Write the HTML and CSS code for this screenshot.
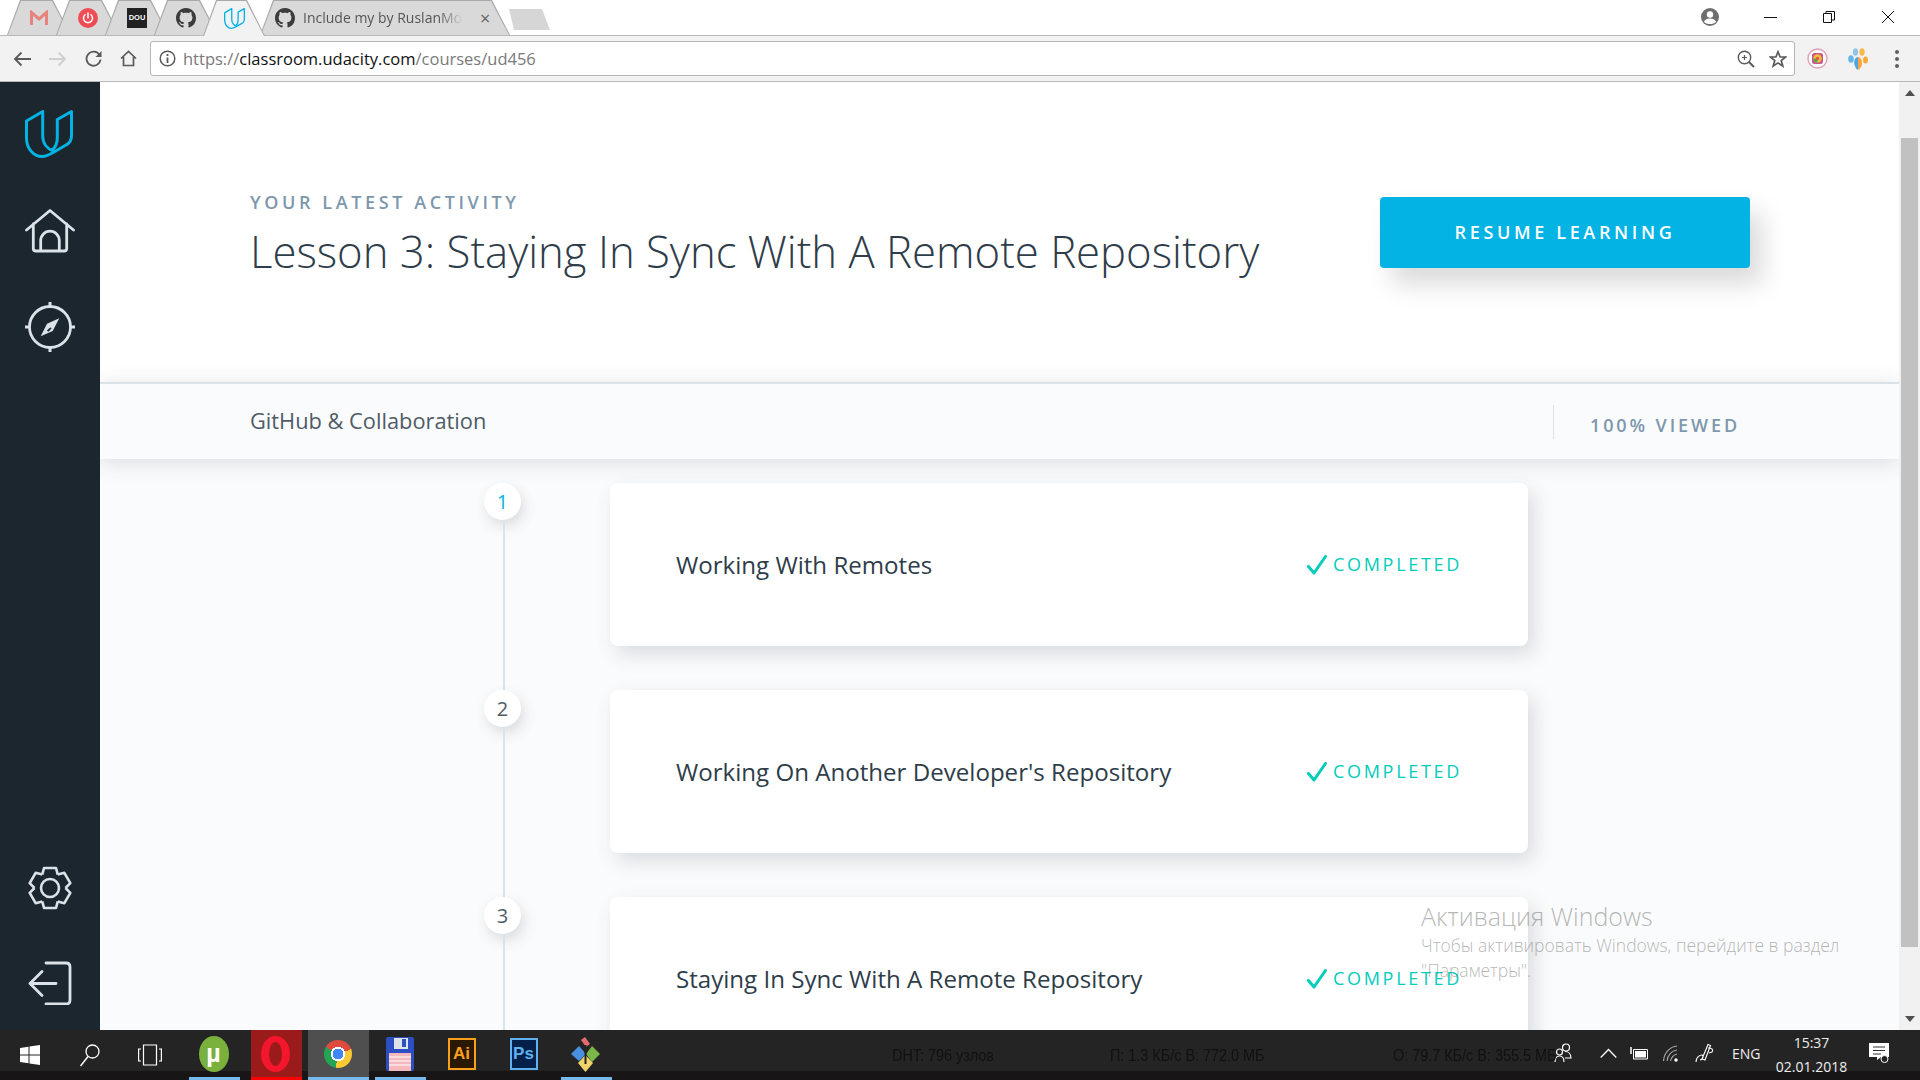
FILE: index.html
```html
<!DOCTYPE html>
<html lang="en">
<head>
<meta charset="utf-8">
<title>Udacity Classroom</title>
<link rel="stylesheet" href="styles.css">
</head>
<body>
<svg class="defs" aria-hidden="true"><defs>
  <symbol id="octo" viewBox="0 0 16 16"><path fill="#3b3b3b" d="M8 0C3.58 0 0 3.58 0 8c0 3.54 2.29 6.53 5.47 7.59.4.07.55-.17.55-.38 0-.19-.01-.82-.01-1.49-2.01.37-2.53-.49-2.69-.94-.09-.23-.48-.94-.82-1.13-.28-.15-.68-.52-.01-.53.63-.01 1.08.58 1.23.82.72 1.21 1.87.87 2.33.66.07-.52.28-.87.51-1.07-1.78-.2-3.64-.89-3.64-3.95 0-.87.31-1.59.82-2.15-.08-.2-.36-1.02.08-2.12 0 0 .67-.21 2.2.82.64-.18 1.32-.27 2-.27.68 0 1.36.09 2 .27 1.53-1.04 2.2-.82 2.2-.82.44 1.1.16 1.92.08 2.12.51.56.82 1.27.82 2.15 0 3.07-1.87 3.75-3.65 3.95.29.25.54.73.54 1.48 0 1.07-.01 1.93-.01 2.2 0 .21.15.46.55.38A8.013 8.013 0 0016 8c0-4.42-3.58-8-8-8z"/></symbol>
  <symbol id="ulogo" viewBox="0 0 48 48"><path fill="none" stroke="#02b3e4" stroke-width="3" stroke-linejoin="round" stroke-linecap="round" d="M17.7 1.500L1.500 11V28C1.500 40 10 46.500 17 46.500C20 46.500 24 45 29 42L41 35C45 33 46.500 30 46.500 26V1.500L32.300 9.500V28C32.300 33 31 37 27 40M17.700 1.500V26C17.700 33 22 39 29 41.500"/></symbol>
  <symbol id="check" viewBox="0 0 20 20"><path fill="none" stroke="#02ccba" stroke-width="3" stroke-linecap="round" stroke-linejoin="round" d="M1.500 11.500L7 18L18.500 1.500"/></symbol>
  <path id="tooth" d="M-7.750 -13.400L-6 -20H6L7.750 -13.400"/>
</defs></svg>

<header class="tabstrip">
  <div class="tab">
    <svg class="ti" width="18" height="16" viewBox="0 0 18 16"><path fill="none" stroke="#e6837c" stroke-width="3" d="M1.500 15V2.500L9 9L16.500 2.500V15"/></svg>
  </div>
  <div class="tab">
    <svg class="ti" width="20" height="20" viewBox="0 0 20 20"><circle cx="10" cy="10" r="10" fill="#ef4c55"/><path fill="none" stroke="#fff" stroke-width="1.500" stroke-linecap="round" d="M7 6.800a4.500 4.500 0 1 0 6 0M10 5v5"/></svg>
  </div>
  <div class="tab"><span class="dou">DOU</span></div>
  <div class="tab"><svg class="ti" width="20" height="20"><use href="#octo"/></svg></div>
  <div class="tab tab-active"><svg class="ti" width="21" height="21"><use href="#ulogo"/></svg></div>
  <div class="tab tab-wide">
    <svg class="ti" width="20" height="20"><use href="#octo"/></svg>
    <span class="tab-title">Include my by RuslanMoz</span>
    <span class="tab-close">×</span>
  </div>
  <div class="newtab"></div>
  <div class="winctl">
    <svg class="profile" width="18" height="18" viewBox="0 0 18 18"><circle cx="9" cy="9" r="9" fill="#6e6e6e"/><circle cx="9" cy="6.500" r="3.200" fill="#fff"/><path fill="#fff" d="M3 14c1-3 4-3.500 6-3.500s5 .5 6 3.500c-1.500 1.500-3.500 2-6 2s-4.500-.5-6-2z"/></svg>
    <svg class="wc wc-min" width="14" height="14" viewBox="0 0 14 14"><path stroke="#111" d="M1 7.500H14"/></svg>
    <svg class="wc wc-max" width="14" height="14" viewBox="0 0 14 14"><path fill="none" stroke="#111" d="M1.500 3.500H9.500V12.500H1.500ZM4 3.500V1.500H12.500V10H9.500"/></svg>
    <svg class="wc" width="14" height="14" viewBox="0 0 14 14"><path stroke="#111" d="M1 1L13 13M13 1L1 13"/></svg>
  </div>
</header>

<nav class="toolbar">
  <svg class="nav-ico" width="18" height="16" viewBox="0 0 18 16"><path fill="none" stroke="#5a5a5a" stroke-width="1.800" d="M18 8H2M8.500 1.500L2 8L8.500 14.500"/></svg>
  <svg class="nav-ico" width="18" height="16" viewBox="0 0 18 16"><path fill="none" stroke="#cfcfcf" stroke-width="1.800" d="M0 8H16M9.500 1.500L16 8L9.500 14.500"/></svg>
  <svg class="nav-ico" width="17" height="17" viewBox="0 0 17 17"><path fill="none" stroke="#5a5a5a" stroke-width="1.800" d="M14.500 5A7 7 0 1 0 15.500 9.500"/><path fill="#5a5a5a" d="M16.500 1V7H10.500Z"/></svg>
  <svg class="nav-ico" width="17" height="17" viewBox="0 0 17 17"><path fill="none" stroke="#5a5a5a" stroke-width="1.700" d="M1 8.500L8.500 1.500L16 8.500M3.500 7V15.500H13.500V7"/></svg>
  <div class="addr">
    <svg width="17" height="17" viewBox="0 0 17 17"><circle cx="8.500" cy="8.500" r="7.300" fill="none" stroke="#5a5a5a" stroke-width="1.500"/><path stroke="#5a5a5a" stroke-width="1.800" d="M8.500 7.500V13M8.500 4V6"/></svg>
    <span class="url"><span class="url-dim">https://</span>classroom.udacity.com<span class="url-dim">/courses/ud456</span></span>
    <svg class="addr-zoom" width="18" height="18" viewBox="0 0 18 18"><circle cx="7.500" cy="7.500" r="6.200" fill="none" stroke="#5a5a5a" stroke-width="1.400"/><path stroke="#5a5a5a" stroke-width="1.200" d="M7.500 5V10M5 7.500H10"/><path stroke="#5a5a5a" stroke-width="2" d="M12 12L17 17"/></svg>
    <svg width="18" height="18" viewBox="0 0 18 18"><path fill="none" stroke="#5a5a5a" stroke-width="1.700" d="M9 1.800L11.100 7H16.700L12.200 10.500L13.800 16L9 12.900L4.200 16L5.800 10.500L1.300 7H6.900Z"/></svg>
  </div>
  <svg class="ext" width="21" height="21" viewBox="0 0 21 21"><circle cx="10.500" cy="10.500" r="9.500" fill="#fff" stroke="#e2a0b8" stroke-width="1.400"/><rect x="5" y="5" width="11" height="11" rx="2.500" fill="#c9558f"/><circle cx="10.500" cy="10.500" r="4.200" fill="#f2c037"/><path fill="#58a84f" d="M6.300 10.500a4.200 4.200 0 0 0 4.200 4.200V10.500z"/><circle cx="10.500" cy="10.500" r="1.800" fill="#e0584a"/></svg>
  <svg class="ext2" width="20" height="22" viewBox="0 0 20 22"><ellipse cx="3" cy="11" rx="2.800" ry="3.800" fill="#64b5e8"/><ellipse cx="7.500" cy="4" rx="2.600" ry="3.800" fill="#8cc4ea"/><ellipse cx="14" cy="4" rx="2.700" ry="3.800" fill="#f8b84a"/><ellipse cx="17.500" cy="12" rx="2.500" ry="3.500" fill="#f9a93a"/><path fill="#4aa6e6" d="M10 9C7 9 5 14 7 18C8 21 10 22 10 22Z"/><path fill="#f9a53a" d="M10 9C13 9 15 14 13.500 18C12 21 10 22 10 22Z"/></svg>
  <svg class="kebab" width="6" height="20" viewBox="0 0 6 20"><circle cx="3" cy="3" r="2" fill="#5f5f5f"/><circle cx="3" cy="10" r="2" fill="#5f5f5f"/><circle cx="3" cy="17" r="2" fill="#5f5f5f"/></svg>
</nav>

<div class="app">
  <aside class="sidebar">
    <div class="side-group">
      <svg class="side-logo" width="48" height="48"><use href="#ulogo"/></svg>
      <svg class="side-home" width="50" height="44" viewBox="0 0 50 44"><path fill="none" stroke="#dbe2e8" stroke-width="2.800" stroke-linecap="round" stroke-linejoin="round" d="M1.500 21L25 1.500L48.500 21M8.300 15V39.500Q8.300 42 11 42H39Q41.700 42 41.700 39.500V15M15.700 42V31.500A9.300 9.300 0 0 1 34.300 31.500V42"/></svg>
      <svg class="side-compass" width="52" height="52" viewBox="-26 -26 52 52"><circle r="20.500" fill="none" stroke="#dbe2e8" stroke-width="2.800"/><path stroke="#dbe2e8" stroke-width="3" d="M0 -25V-20M0 25V20M-25 0H-20M25 0H20"/><path fill="#dbe2e8" d="M9.300 -8.700L2.700 4L-9.300 9.300L-3 -3.300Z"/><path fill="#1c262f" d="M-3.200 3.600L0.200 0.400L1.600 1.200L-1.500 4.700Z"/></svg>
    </div>
    <div class="side-group side-bottom">
      <svg class="side-gear" width="44" height="44" viewBox="-22 -22 44 44"><g fill="none" stroke="#dbe2e8" stroke-width="2.600" stroke-linejoin="round"><use href="#tooth"/><use href="#tooth" transform="rotate(60)"/><use href="#tooth" transform="rotate(120)"/><use href="#tooth" transform="rotate(180)"/><use href="#tooth" transform="rotate(240)"/><use href="#tooth" transform="rotate(300)"/><circle r="9"/></g></svg>
      <svg class="side-exit" width="44" height="44" viewBox="0 0 44 44"><path fill="none" stroke="#dbe2e8" stroke-width="2.800" stroke-linecap="round" stroke-linejoin="round" d="M18 2H38Q42 2 42 6V39Q42 43 38 43H18M28 22.500H2M14 10.500L2 22.500L14 34.500"/></svg>
    </div>
  </aside>

  <main class="content">
    <section class="hero">
      <div class="hero-text">
        <div class="eyebrow">YOUR LATEST ACTIVITY</div>
        <h1 class="hero-title">Lesson 3: Staying In Sync With A Remote Repository</h1>
      </div>
      <button class="resume">RESUME LEARNING</button>
    </section>
    <section class="course-bar">
      <span class="course-name">GitHub &amp; Collaboration</span>
      <span class="course-sep"></span>
      <span class="course-progress">100% VIEWED</span>
    </section>
    <section class="steps">
      <div class="step">
        <div class="step-rail"><span class="step-num step-num-first">1</span><span class="step-line"></span></div>
        <article class="card"><span class="card-title">Working With Remotes</span><span class="done"><svg width="20" height="20"><use href="#check"/></svg>COMPLETED</span></article>
      </div>
      <div class="step">
        <div class="step-rail"><span class="step-num">2</span><span class="step-line"></span></div>
        <article class="card"><span class="card-title">Working On Another Developer's Repository</span><span class="done"><svg width="20" height="20"><use href="#check"/></svg>COMPLETED</span></article>
      </div>
      <div class="step">
        <div class="step-rail"><span class="step-num">3</span><span class="step-line"></span></div>
        <article class="card"><span class="card-title">Staying In Sync With A Remote Repository</span><span class="done"><svg width="20" height="20"><use href="#check"/></svg>COMPLETED</span></article>
      </div>
    </section>
  </main>

  <div class="scrollbar">
    <span class="sb-arrow sb-up"></span>
    <span class="sb-thumb"></span>
    <span class="sb-arrow sb-down"></span>
  </div>

  <div class="watermark">
    <div class="wm-title">Активация Windows</div>
    <div class="wm-text">Чтобы активировать Windows, перейдите в раздел<br>"Параметры".</div>
  </div>
</div>

<footer class="taskbar">
  <div class="tb-sys">
    <svg width="20" height="20" viewBox="0 0 20 20"><path fill="#fff" d="M0 3L8.500 1.800V9.500H0ZM9.500 1.600L20 0V9.500H9.500ZM0 10.500H8.500V18.200L0 17ZM9.500 10.500H20V20L9.500 18.400Z"/></svg>
    <svg class="tb-search" width="20" height="24" viewBox="0 0 20 24"><circle cx="12.500" cy="8.500" r="6.500" fill="none" stroke="#fff" stroke-width="1.300"/><path stroke="#fff" stroke-width="1.500" d="M8 13.500L0.500 23"/></svg>
    <svg class="tb-view" width="24" height="22" viewBox="0 0 24 22"><path fill="none" stroke="#fff" stroke-width="1.200" d="M5.500 1H18.500V21H5.500ZM3 5H.6V17H3M21 5H23.400V17H21"/></svg>
  </div>
  <div class="tb-apps">
    <div class="slot slot-on"><span class="utorrent">µ</span></div>
    <div class="slot slot-opera"><span class="opera"></span></div>
    <div class="slot slot-chrome slot-on"><span class="chrome"></span></div>
    <div class="slot slot-on">
      <svg width="28" height="34" viewBox="0 0 28 34"><rect width="28" height="34" rx="2" fill="#2d4fc4"/><rect x="8" y="1" width="14" height="11" fill="#dfe3ea"/><rect x="16" y="2" width="4" height="8" fill="#2d4fc4"/><rect x="3" y="16" width="22" height="18" fill="#f4b9bd"/><path stroke="#fff" d="M3 20H25M3 24H25M3 28H25"/></svg>
    </div>
    <div class="slot"><span class="appbox appbox-ai">Ai</span></div>
    <div class="slot"><span class="appbox appbox-ps">Ps</span></div>
    <div class="slot slot-on">
      <svg width="31" height="36" viewBox="0 0 31 36"><path fill="#e56b6f" d="M11 4L15 1L20 8L16 11Z"/><path fill="#4a90e2" d="M9 10L16 18L9 25L1 18Z"/><path fill="#7ab648" d="M22 10L30 18L22 26L16 18Z"/><path fill="#f1d36b" d="M15.500 19L23 27L15.500 36L8 27Z"/><path stroke="#222" stroke-width="2" fill="none" d="M15.500 9V28"/></svg>
    </div>
  </div>
  <div class="status">
    <span class="st st-dht">DHT: 796 узлов</span>
    <span class="st st-down">П: 1.3 КБ/с В: 772.0 МБ</span>
    <span class="st st-up">О: 79.7 КБ/с В: 355.5 МБ</span>
  </div>
  <div class="tray">
    <svg width="18" height="20" viewBox="0 0 18 20"><g fill="none" stroke="#fff" stroke-width="1.200"><circle cx="12" cy="4.500" r="3.500"/><circle cx="5.500" cy="9" r="3"/><path d="M1 19C1 15 3 13 5.500 13S10 15 10 19M11 8.500C14 8.500 17 10.500 17 15H11"/></g></svg>
    <svg class="tr-chev" width="17" height="10" viewBox="0 0 17 10"><path fill="none" stroke="#fff" stroke-width="1.300" d="M.7 9.500L8.500 1.500L16.300 9.500"/></svg>
    <svg class="tr-bat" width="19" height="13" viewBox="0 0 19 13"><path fill="none" stroke="#fff" d="M4.500 2.500H18.500V12H4.500Z"/><rect x="6" y="4" width="11" height="6.500" fill="#fff"/><path stroke="#fff" stroke-width="1.500" d="M2 0V7"/></svg>
    <svg class="tr-wifi" width="15" height="17" viewBox="0 0 15 17"><path fill="none" stroke="#aaa" stroke-width="1.100" d="M.5 16C1 8 7 1.500 14 1M4 16C4.500 10.500 8.500 5.500 14 5M7.500 16C8 13 10.500 9.500 14 9"/><circle cx="13" cy="15" r="1.700" fill="#fff"/></svg>
    <svg class="tr-pen" width="20" height="20" viewBox="0 0 20 20"><path fill="none" stroke="#fff" stroke-width="1.100" d="M1 19C1 14 5 12 7 12C9 12 8 17 5 17M7 16L13 1.500L15.500 2.500L10 17ZM13 5C16 5 19 6 17 9L14 10"/></svg>
    <span class="tr-lang">ENG</span>
    <span class="clock"><span>15:37</span><span>02.01.2018</span></span>
    <svg class="tr-note" width="20" height="20" viewBox="0 0 20 20"><path fill="#fff" d="M0 0H20V14H12L8 17V14H0Z"/><path stroke="#333" d="M4 4H16M4 7.500H16M4 11H12"/><circle cx="15.500" cy="16" r="3.500" fill="#222" stroke="#fff"/></svg>
  </div>
</footer>
</body>
</html>
```
FILE: styles.css
```css
* { box-sizing: border-box; }
html, body { margin: 0; height: 100%; }
body {
  width: 1920px; height: 1080px; overflow: hidden;
  display: flex; flex-direction: column;
  font-family: "Open Sans", "Noto Sans", sans-serif;
  background: #fff;
}
.defs { width: 0; height: 0; position: absolute; }

/* browser tab strip */
.tabstrip { height: 35px; flex: none; display: flex; align-items: flex-start; padding-left: 7px; background: #fff; }
.tab {
  position: relative; width: 64px; height: 35px; margin-right: -15px; flex: none;
  display: flex; align-items: center; justify-content: center;
  background: #a9a9a9;
  clip-path: polygon(0 100%, 13px 0, calc(100% - 18px) 0, 100% 100%);
}
.tab::before {
  content: ""; position: absolute; inset: 1px 1px 0;
  background: #d9d9d9;
  clip-path: polygon(0 100%, 13px 0, calc(100% - 18px) 0, 100% 100%);
}
.tab > * { position: relative; }
.tab-active { height: 36px; z-index: 2; margin-left: 0; margin-right: -5px; width: 62px; }
.tab-active::before { background: #f2f2f2; }
.tab-wide { width: 250px; margin-right: 0; justify-content: flex-start; padding-left: 15px; gap: 8px; }
.tab-title {
  width: 160px; white-space: nowrap; overflow: hidden; font-size: 14px; color: #555;
  -webkit-mask-image: linear-gradient(90deg, #000 85%, transparent);
  mask-image: linear-gradient(90deg, #000 85%, transparent);
}
.tab-close { font-size: 18px; line-height: 20px; color: #666; margin-left: 9px; }
.dou {
  width: 20px; height: 20px; background: #222; color: #fff; font-size: 7.500px; font-weight: 700;
  display: flex; align-items: center; justify-content: center; font-family: "Liberation Sans", sans-serif;
}
.newtab {
  width: 41px; height: 21px; margin: 9px 0 0 -1px; flex: none; background: #d6d6d6;
  clip-path: polygon(0 0, 33px 0, 100% 100%, 5px 100%);
}
.winctl { margin-left: auto; display: flex; align-items: center; height: 33px; padding-right: 25px; }
.wc { display: block; }
.wc-min { margin-left: 44px; }
.wc-max { margin: 0 45px 0 45px; }

/* browser toolbar */
.toolbar {
  height: 47px; flex: none; display: flex; align-items: center;
  padding: 0 20px 0 13px; gap: 18px;
  background: #f2f2f2; border-top: 1px solid #b9b9b9; border-bottom: 1px solid #b9b9b9;
}
.addr {
  flex: 1; height: 35px; margin-left: -5px; margin-right: -6px;
  display: flex; align-items: center; gap: 7px; padding: 0 7px 0 8px;
  background: #fff; border: 1px solid #b5b5b5; border-radius: 3px;
}
.url { font-size: 16.500px; color: #111; }
.url-dim { color: #7a7a7a; }
.addr-zoom { margin-left: auto; margin-right: 7px; }
.ext2 { margin-left: 2px; }
.kebab { margin-left: 8px; }

/* app */
.app { flex: 1; min-height: 0; display: flex; }
.sidebar { width: 100px; flex: none; background: #1c262f; display: flex; flex-direction: column; justify-content: space-between; align-items: center; }
.side-group { display: flex; flex-direction: column; align-items: center; }
.side-logo { margin: 28px 2px 0 0; }
.side-home { margin-top: 51px; }
.side-compass { margin-top: 48px; }
.side-bottom { padding-bottom: 25px; }
.side-gear { margin-top: 1px; }
.side-exit { margin-top: 51px; margin-left: -1px; }

.content { flex: 1; min-width: 0; display: flex; flex-direction: column; overflow: hidden; background: #fafbfc; }
.hero { height: 300px; flex: none; display: flex; justify-content: space-between; align-items: flex-start; padding: 108px 149px 0 150px; background: #fff; }
.eyebrow { font-size: 18px; line-height: 24px; letter-spacing: 3.600px; color: #7d97ad; font-weight: 600; }
.hero-title { margin: 8px 0 0; font-size: 43.700px; line-height: 59px; font-weight: 300; color: #2e3d49; }
.resume {
  width: 370px; height: 71px; margin-top: 7px; padding: 0 0 2px; border: 0; border-radius: 4px;
  background: #02b3e4; color: #fff; font: 600 18px "Open Sans", sans-serif; letter-spacing: 3.650px;
  box-shadow: 12px 16px 26px rgba(0, 0, 0, .15);
}
.course-bar {
  position: relative; z-index: 1; height: 77px; flex: none; display: flex; align-items: center;
  padding: 0 159px 0 150px; background: #fafbfc; border-top: 2px solid #dbe2e8;
  box-shadow: 0 3px 20px rgba(46, 61, 73, .16);
}
.course-name { font-size: 21.800px; color: #4f5b66; margin-bottom: 2px; }
.course-sep { width: 1px; height: 34px; margin: 0 36px 0 auto; background: #dbe2e8; }
.course-progress { font-size: 18px; font-weight: 600; letter-spacing: 2.900px; color: #7d97ad; margin-top: 6px; }

.steps { padding: 24px 0 0 384px; display: flex; flex-direction: column; flex: none; }
.step { display: flex; gap: 89px; flex: none; }
.step-rail { width: 37px; flex: none; display: flex; flex-direction: column; align-items: center; }
.step-num {
  width: 37px; height: 37px; flex: none; border-radius: 50%; background: #fff;
  display: flex; align-items: center; justify-content: center;
  font-size: 20px; font-weight: 400; color: #4f5b66;
  box-shadow: 3px 6px 14px rgba(46, 61, 73, .16);
}
.step-num-first { color: #02b3e4; }
.step-line { width: 2px; flex: 1; margin-left: 2px; background: #dbe2e8; }
.card {
  width: 918px; height: 163px; margin-bottom: 44px; padding: 0 66px 0 66px;
  display: flex; align-items: center; justify-content: space-between;
  background: #fff; border-radius: 8px; box-shadow: 6px 8px 20px rgba(46, 61, 73, .16);
}
.card-title { font-size: 24.100px; color: #2e3d49; }
.done { display: flex; align-items: center; gap: 6px; padding-bottom: 2px; font-size: 18px; font-weight: 500; letter-spacing: 2.700px; color: #02ccba; }
.done svg { margin-top: 2px; }

.scrollbar { width: 21px; flex: none; background: #f1f1f1; display: flex; flex-direction: column; align-items: center; }
.sb-arrow { width: 0; height: 0; border-left: 5px solid transparent; border-right: 5px solid transparent; flex: none; }
.sb-up { border-bottom: 6px solid #505050; margin-top: 8px; }
.sb-thumb { width: 17px; height: 809px; margin-top: 42px; background: #c1c1c1; flex: none; }
.sb-down { border-top: 6px solid #505050; margin-top: auto; margin-bottom: 8px; }

.watermark { position: absolute; left: 1421px; top: 899px; color: rgba(110, 110, 110, .5); font-weight: 300; }
.wm-title { font-size: 25px; line-height: 34px; }
.wm-text { font-size: 17.500px; line-height: 25px; }

/* windows taskbar */
.taskbar {
  height: 50px; flex: none; display: flex; align-items: center; color: #fff;
  background: linear-gradient(#242424 0 41px, #171515 41px);
}
.tb-sys { display: flex; align-items: center; padding-left: 20px; width: 189px; flex: none; }
.tb-search { margin-left: 40px; }
.tb-view { margin-left: 38px; }
.tb-apps { display: flex; gap: 11px; height: 50px; flex: none; }
.slot { width: 51px; height: 50px; display: flex; align-items: center; justify-content: center; padding-right: 2px; border-bottom: 3px solid transparent; }
.slot-on { border-bottom-color: #76b9ed; }
.slot-opera { background: #9b1a1a; border-bottom-color: #f00; }
.slot-chrome { width: 61px; margin: 0 -5px; background: #4f4f4f; }
.utorrent {
  width: 30px; height: 36px; flex: none; border-radius: 50%; display: flex; align-items: center; justify-content: center;
  background: #79b13c; color: #fff; font: 700 25px "Liberation Sans", sans-serif;
}
.opera { width: 29px; height: 36px; flex: none; border-radius: 50%; border: 6px solid #f3162d; border-left-width: 8px; border-right-width: 8px; background: #9b1a1a; }
.chrome {
  width: 28px; height: 28px; flex: none; border-radius: 50%;
  background:
    radial-gradient(circle, #4285f4 0 26%, #fff 27% 36%, transparent 37%),
    conic-gradient(from -60deg, #dd4b3e 0 130deg, #fcc934 0 250deg, #23a455 0);
}
.appbox {
  width: 28px; height: 32px; flex: none; display: flex; align-items: center; justify-content: center;
  font: 700 17px "Liberation Sans", sans-serif; border: 2px solid;
}
.appbox-ai { background: #2a1800; color: #f9a11b; border-color: #f9a11b; }
.appbox-ps { background: #03204a; color: #5fb1ef; border-color: #5fb1ef; }
.status { flex: 1; min-width: 0; display: flex; align-items: center; height: 41px; align-self: flex-start; padding-top: 10px; }
.st { font: 16px "Liberation Sans", sans-serif; color: #111; white-space: nowrap; flex: none; transform: scaleX(.9); transform-origin: left center; }
.st-dht { margin-left: 280px; }
.st-down { margin-left: 105px; }
.st-up { margin-left: 111px; }
.tray { width: 366px; flex: none; display: flex; align-items: center; height: 50px; padding-bottom: 4px; }
.tr-chev { margin-left: 28px; }
.tr-bat { margin-left: 12px; }
.tr-wifi { margin-left: 15px; }
.tr-pen { margin-left: 17px; }
.tr-lang { margin-left: 17px; font-size: 14px; color: #eee; }
.clock { width: 76px; margin-left: 13px; display: flex; flex-direction: column; align-items: center; font-size: 14px; line-height: 24px; padding-top: 4px; color: #eee; }
.tr-note { margin-left: 19px; }
```
